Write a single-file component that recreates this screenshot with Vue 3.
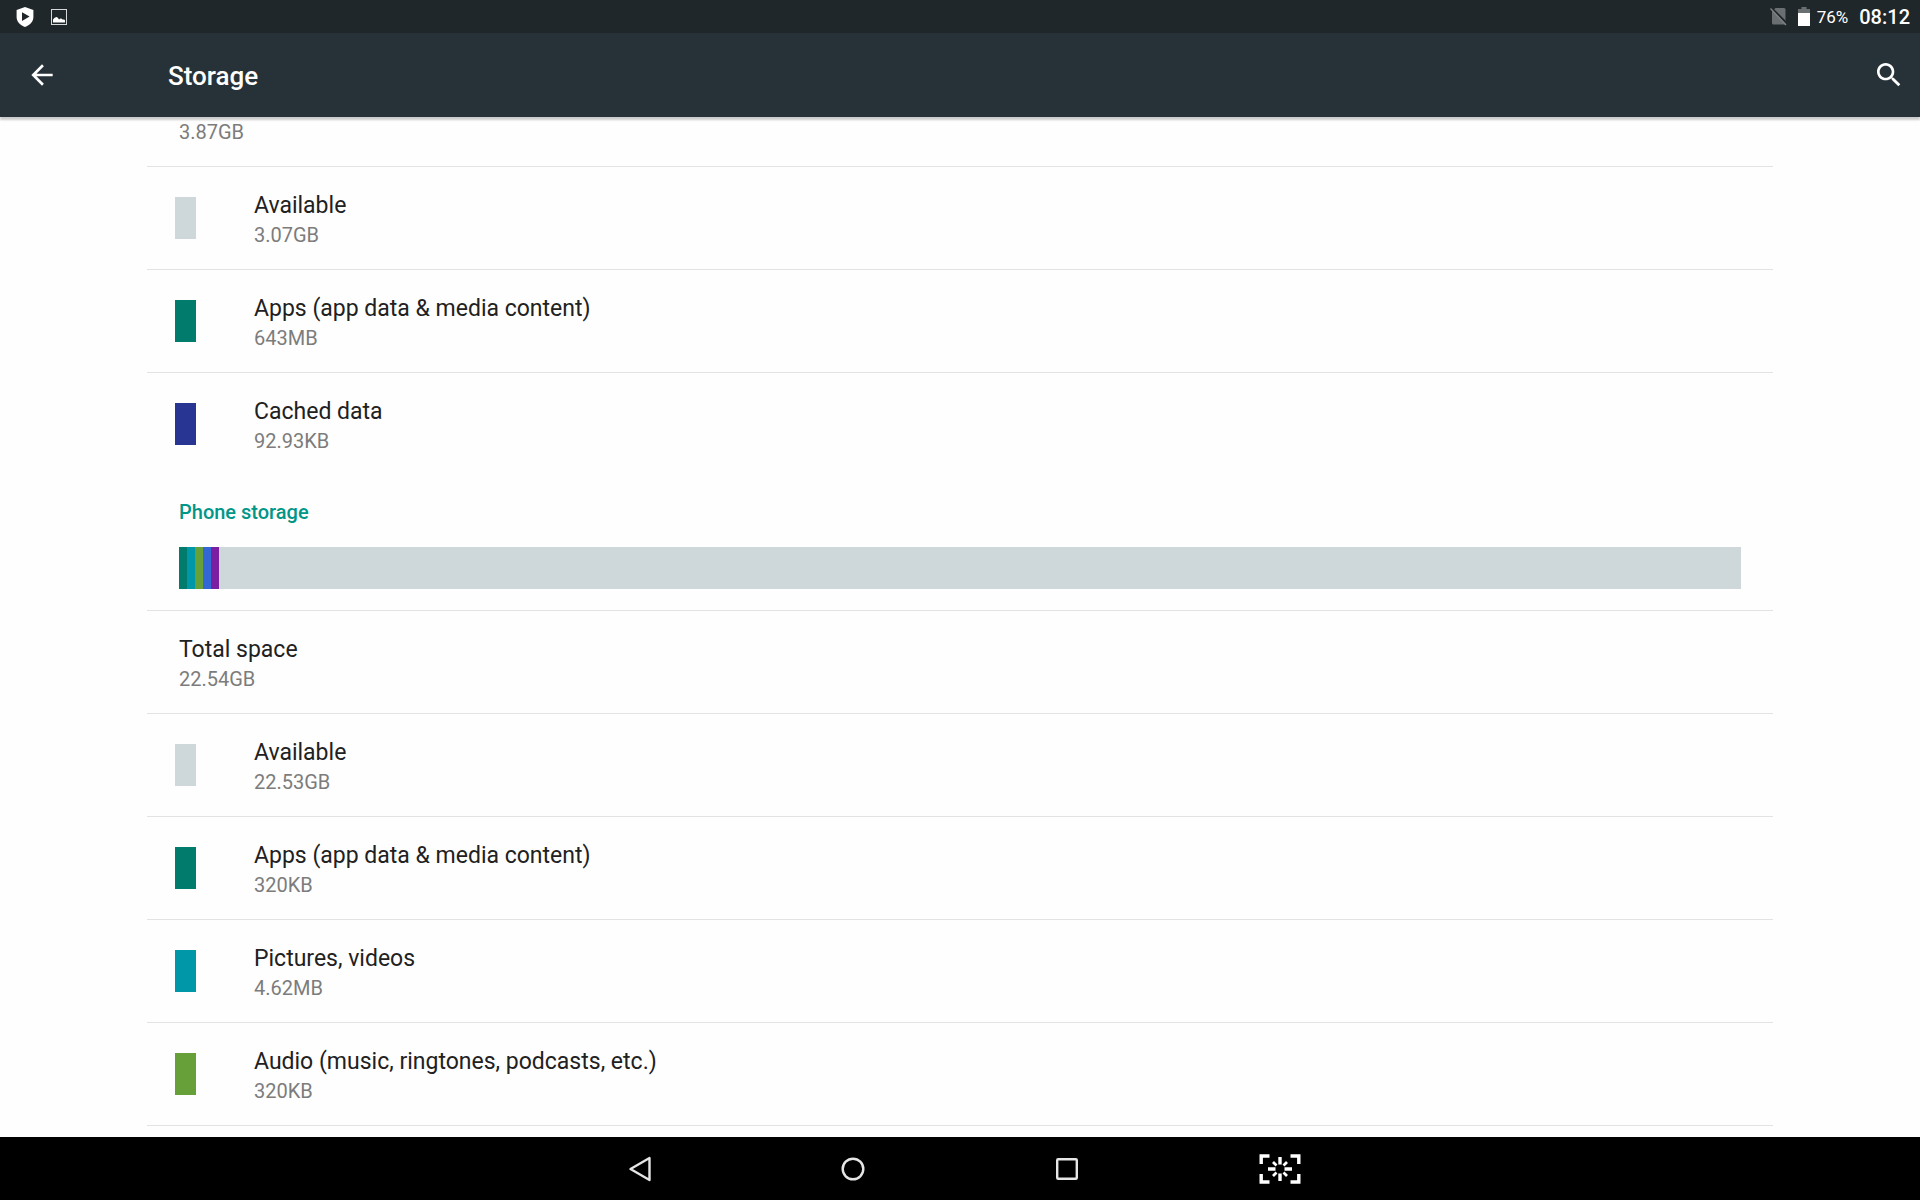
<template>
  <div class="screen">
    <div class="statusbar">
      <div class="notifications">
        <svg class="icon-shield" viewBox="0 0 18 20">
          <path
            fill="#fff"
            fill-rule="evenodd"
            d="M9 0 L17.4 3 V10 C17.4 14.6 14 18.2 9 20 C4 18.2 .6 14.6 .6 10 V3 Z M6 5.2 V14 L13.6 9.6 Z"
          />
        </svg>
        <svg class="icon-image" viewBox="0 0 16 16">
          <rect x="0.5" y="0.5" width="15" height="15" fill="none" stroke="#d5d8d9" />
          <path fill="#fff" d="M2 13.5 V10.5 Q3.5 8 5.5 8 Q7 8 8 10.5 Q10 8.5 11.5 10.5 Q14 10 14 11.5 V13.5 Z" />
        </svg>
      </div>
      <div class="system">
        <svg class="icon-sim" viewBox="0 0 17 19">
          <path fill="#6a6f72" d="M5.5 1 H14 Q15.5 1 15.5 2.5 V17.5 H3.5 Q2 17.5 2 16 V4.5 Z" />
          <path stroke="#20272a" stroke-width="2" d="M1.5 1 L17 16.5" />
          <path stroke="#7c8183" stroke-width="1.4" d="M0.5 1.5 L16 18" />
        </svg>
        <svg class="icon-battery" viewBox="0 0 12 19">
          <path fill="#6a6f72" d="M3.5 0 H8.5 V2 H12 V7 H0 V2 H3.5 Z" />
          <rect y="6" width="12" height="13" fill="#fff" />
        </svg>
        <span class="percent">76%</span>
        <span class="clock">08:12</span>
      </div>
    </div>

    <header class="toolbar">
      <button class="tool" type="button" aria-label="Back">
        <svg viewBox="0 0 24 24">
          <path fill="#fff" d="M20 11H7.83l5.59-5.59L12 4l-8 8 8 8 1.41-1.41L7.83 13H20v-2z" />
        </svg>
      </button>
      <h1>Storage</h1>
      <button class="tool" type="button" aria-label="Search">
        <svg viewBox="0 0 24 24">
          <path
            fill="#fff"
            d="M15.5 14h-.79l-.28-.27C15.41 12.59 16 11.11 16 9.5 16 5.91 13.09 3 9.5 3S3 5.91 3 9.5 5.91 16 9.5 16c1.61 0 3.09-.59 4.23-1.57l.27.28v.79l5 4.99L20.49 19l-4.99-5zm-6 0C7.01 14 5 11.99 5 9.5S7.01 5 9.5 5 14 7.01 14 9.5 11.99 14 9.5 14z"
          />
        </svg>
      </button>
    </header>

    <main class="content">
      <section>
        <p class="leftover">3.87GB</p>
        <div v-for="item in internal" :key="item.title" class="row">
          <span class="swatch" :style="{ backgroundColor: item.color }"></span>
          <div class="text">
            <div class="title">{{ item.title }}</div>
            <div class="summary">{{ item.size }}</div>
          </div>
        </div>
      </section>

      <section>
        <div class="usage">
          <h2>Phone storage</h2>
          <div class="bar">
            <span
              v-for="color in segments"
              :key="color"
              class="segment"
              :style="{ backgroundColor: color }"
            ></span>
          </div>
        </div>
        <div v-for="item in phone" :key="item.title" class="row">
          <span
            v-if="item.color"
            class="swatch"
            :style="{ backgroundColor: item.color }"
          ></span>
          <div class="text">
            <div class="title">{{ item.title }}</div>
            <div class="summary">{{ item.size }}</div>
          </div>
        </div>
        <hr />
      </section>
    </main>

    <nav class="navbar">
      <button type="button" aria-label="Back">
        <svg width="24" height="26" viewBox="0 0 24 26">
          <path
            fill="none"
            stroke="#e6e6e6"
            stroke-width="2.4"
            stroke-linejoin="round"
            d="M21.5 2 V24 L2.5 13 Z"
          />
        </svg>
      </button>
      <button type="button" aria-label="Home">
        <svg width="24" height="24" viewBox="0 0 24 24">
          <circle cx="12" cy="12" r="10.3" fill="none" stroke="#e6e6e6" stroke-width="2.4" />
        </svg>
      </button>
      <button type="button" aria-label="Recents">
        <svg width="22" height="22" viewBox="0 0 22 22">
          <rect
            x="1.2"
            y="1.2"
            width="19.6"
            height="19.6"
            rx="1"
            fill="none"
            stroke="#e6e6e6"
            stroke-width="2.4"
          />
        </svg>
      </button>
      <button type="button" aria-label="Screenshot">
        <svg width="42" height="30" viewBox="0 0 42 30">
          <g fill="none" stroke="#fff" stroke-width="3.4">
            <path d="M2.2 10 V2 H10.5 M31.5 2 H39.8 V10 M39.8 20 V28 H31.5 M10.5 28 H2.2 V20" />
            <path d="M21 3 V10.5 M21 19.5 V27 M9 15 H16.5 M25.5 15 H33" />
            <path
              stroke-width="2.8"
              d="M14 8 L17.5 11.5 M28 8 L24.5 11.5 M14 22 L17.5 18.5 M28 22 L24.5 18.5"
            />
          </g>
        </svg>
      </button>
    </nav>
  </div>
</template>

<script setup>
const internal = [
  { title: "Available", size: "3.07GB", color: "#ced7da" },
  { title: "Apps (app data & media content)", size: "643MB", color: "#007b6c" },
  { title: "Cached data", size: "92.93KB", color: "#283593" },
];

const phone = [
  { title: "Total space", size: "22.54GB" },
  { title: "Available", size: "22.53GB", color: "#ced7da" },
  { title: "Apps (app data & media content)", size: "320KB", color: "#007b6c" },
  { title: "Pictures, videos", size: "4.62MB", color: "#0098a9" },
  {
    title: "Audio (music, ringtones, podcasts, etc.)",
    size: "320KB",
    color: "#67a038",
  },
];

const segments = ["#007b6c", "#0098a9", "#67a038", "#3367d6", "#7b1fa2"];
</script>

<style>
body {
  margin: 0;
  background-color: #fefefe;
}
</style>

<style scoped>
.screen {
  display: flex;
  flex-direction: column;
  height: 100vh;
  font-family: Roboto, "Noto Sans", sans-serif;
  color: #212121;
}

button {
  display: flex;
  align-items: center;
  justify-content: center;
  padding: 0;
  border: none;
  background: none;
  cursor: pointer;
}

h1,
h2,
p {
  margin: 0;
  font-weight: 500;
}

.statusbar {
  display: flex;
  flex: none;
  align-items: center;
  justify-content: space-between;
  height: 33px;
  padding: 0 10px 0 16px;
  background-color: #20272a;
  color: #fff;
}

.notifications,
.system {
  display: flex;
  align-items: center;
}

.notifications {
  gap: 17px;
}

.icon-shield {
  width: 18px;
  height: 20px;
}

.icon-image {
  width: 16px;
  height: 16px;
}

.icon-sim {
  width: 17px;
  height: 19px;
}

.icon-battery {
  width: 12px;
  height: 19px;
  margin: 0 7px 0 11px;
}

.percent {
  font-size: 17px;
}

.clock {
  margin-left: 11px;
  font-size: 20px;
  font-weight: 500;
}

.toolbar {
  z-index: 1;
  display: flex;
  flex: none;
  align-items: center;
  height: 84px;
  padding: 0 15px 0 26px;
  background-color: #263238;
  box-shadow: 0 3px 2px rgba(0, 0, 0, 0.2);
  color: #fff;
}

.tool,
.tool svg {
  width: 32px;
  height: 32px;
}

.toolbar h1 {
  flex: 1;
  padding-top: 2px;
  margin-left: 110px;
  font-size: 26px;
}

.content {
  flex: 1;
  min-height: 0;
  padding: 0 147px;
  overflow: hidden;
}

.leftover {
  padding: 3px 32px 22px;
  font-size: 20px;
  font-weight: 400;
  line-height: 24px;
  color: #7c7c7c;
}

.row {
  display: flex;
  align-items: center;
  height: 102px;
  padding: 0 32px 0 28px;
  border-top: 1px solid #e3e3e3;
}

.swatch {
  flex: none;
  width: 21px;
  height: 42px;
  margin-right: 54px;
}

.text {
  padding: 4px 4px 0;
}

.title {
  font-size: 23px;
  line-height: 30px;
}

.summary {
  font-size: 20px;
  line-height: 28px;
  color: #7c7c7c;
}

.usage {
  padding: 25px 32px 21px;
}

.usage h2 {
  margin-bottom: 23px;
  font-size: 20px;
  line-height: 24px;
  color: #009688;
}

.bar {
  display: flex;
  height: 42px;
  background-color: #ced7da;
}

.segment {
  width: 8px;
}

hr {
  margin: 0;
  border: none;
  border-top: 1px solid #e3e3e3;
}

.navbar {
  display: flex;
  flex: none;
  justify-content: center;
  height: 63px;
  background-color: #000;
}

.navbar button {
  flex: 0 0 calc(100% / 9);
}
</style>
